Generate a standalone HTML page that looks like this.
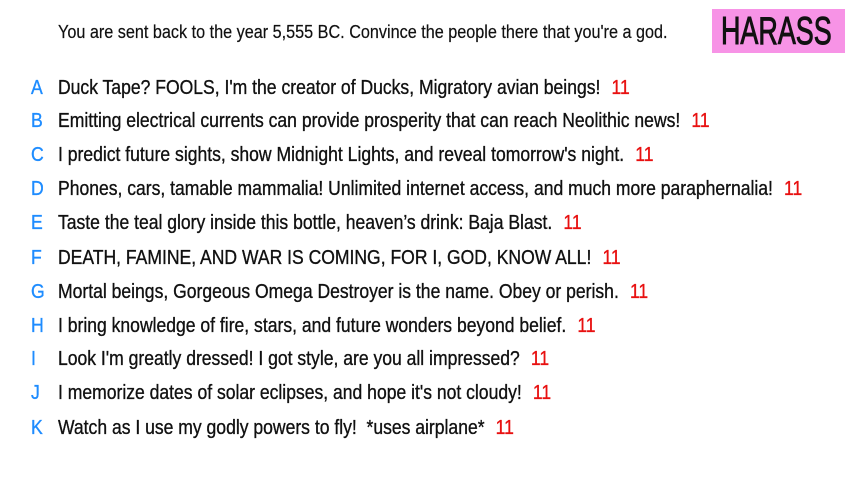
<!DOCTYPE html>
<html><head><meta charset="utf-8"><style>
body{margin:0;width:853px;height:480px;background:#fff;position:relative;overflow:hidden;font-family:"Liberation Sans",sans-serif;color:#111}
.t{position:absolute;left:58px;top:22px;font-size:18px;white-space:nowrap;transform:scaleX(0.9);transform-origin:0 0;-webkit-text-stroke:0.2px #111}
.h{position:absolute;left:712px;top:9px;width:133px;height:44px;background:#f793e6;overflow:hidden}
.h div{position:absolute;left:9px;top:0;font-size:39px;line-height:46px;color:#111;white-space:nowrap;transform:scaleX(0.69);transform-origin:0 0;-webkit-text-stroke:1px #111}
.r{position:absolute;left:0;font-size:20.5px;white-space:nowrap;line-height:24px;width:853px;-webkit-text-stroke:0.35px currentColor}
.r b{font-weight:normal;color:#1e8cff;position:absolute;left:31px;transform:scaleX(0.86);transform-origin:0 0}
.r span{position:absolute;left:58px;transform:scaleX(0.856);transform-origin:0 0}
.r i{font-style:normal;color:#e81010;margin-left:13px}
</style></head><body>
<div class="t">You are sent back to the year 5,555 BC. Convince the people there that you're a god.</div>
<div class="h"><div>HARASS</div></div>
<div class="r" style="top:76px"><b>A</b><span>Duck Tape? FOOLS, I'm the creator of Ducks, Migratory avian beings!<i>11</i></span></div>
<div class="r" style="top:109px"><b>B</b><span>Emitting electrical currents can provide prosperity that can reach Neolithic news!<i>11</i></span></div>
<div class="r" style="top:143px"><b>C</b><span>I predict future sights, show Midnight Lights, and reveal tomorrow's night.<i>11</i></span></div>
<div class="r" style="top:177px"><b>D</b><span>Phones, cars, tamable mammalia! Unlimited internet access, and much more paraphernalia!<i>11</i></span></div>
<div class="r" style="top:211px"><b>E</b><span>Taste the teal glory inside this bottle, heaven’s drink: Baja Blast.<i>11</i></span></div>
<div class="r" style="top:246px"><b>F</b><span>DEATH, FAMINE, AND WAR IS COMING, FOR I, GOD, KNOW ALL!<i>11</i></span></div>
<div class="r" style="top:280px"><b>G</b><span>Mortal beings, Gorgeous Omega Destroyer is the name. Obey or perish.<i>11</i></span></div>
<div class="r" style="top:314px"><b>H</b><span>I bring knowledge of fire, stars, and future wonders beyond belief.<i>11</i></span></div>
<div class="r" style="top:347px"><b>I</b><span>Look I'm greatly dressed! I got style, are you all impressed?<i>11</i></span></div>
<div class="r" style="top:381px"><b>J</b><span>I memorize dates of solar eclipses, and hope it's not cloudy!<i>11</i></span></div>
<div class="r" style="top:416px"><b>K</b><span>Watch as I use my godly powers to fly!&nbsp; *uses airplane*<i>11</i></span></div>
</body></html>
